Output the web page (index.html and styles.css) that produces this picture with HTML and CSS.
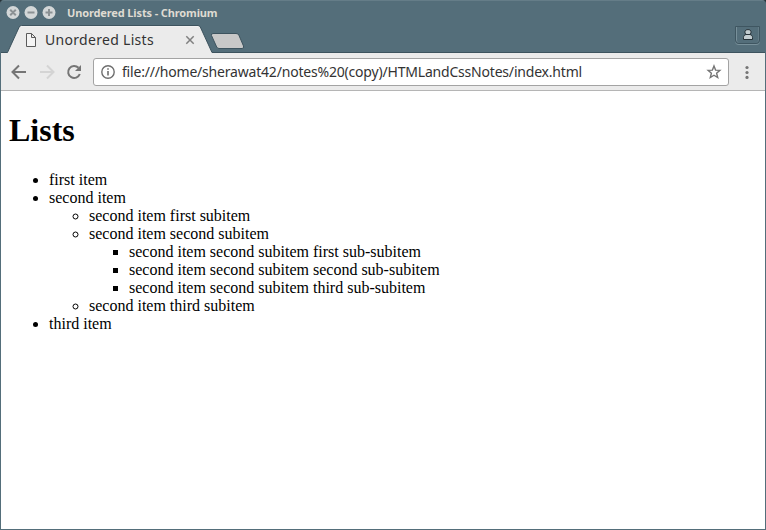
FILE: index.html
```html
<!DOCTYPE html>
<html lang="en">
<head>
<meta charset="utf-8">
<title>Unordered Lists</title>
<link rel="stylesheet" href="styles.css">
</head>
<body>
<div class="window">
  <header class="titlebar">
    <svg class="controls" width="52" height="16" viewBox="0 0 52 16">
      <g fill="#d3d7d8"><circle cx="7" cy="7.500" r="6.500"/><circle cx="25" cy="7.500" r="6.500"/><circle cx="43" cy="7.500" r="6.500"/></g>
      <path d="M4.200 4.700l5.600 5.600M9.800 4.700l-5.600 5.600M21.500 7.500h7M39.500 7.500h7M43 4v7" stroke="#8b9194" stroke-width="2" fill="none"/>
    </svg>
    <span class="window-title">Unordered Lists - Chromium</span>
  </header>
  <div class="tabstrip">
    <div class="tab">
      <svg class="tab-shape" width="208" height="29" viewBox="0 0 208 29">
        <path d="M0 29V27.500H1.500L13.200 2Q14 .5 15.500 .5H192Q193.500 .5 194.300 2L206 27.500H208V29Z" fill="#ebebeb"/>
        <path d="M0 27.500H1.500L13.200 2Q14 .5 15.500 .5H192Q193.500 .5 194.300 2L206 27.500H208" fill="none" stroke="#3d535e"/>
        <path d="M15 1.500H192" stroke="#f1f1f1"/>
      </svg>
      <svg class="doc" width="12" height="14" viewBox="0 0 12 14"><path d="M1.500 .5H6.500L10.500 4.500V13.500H1.500ZM6.500 .5V4.500H10.500" fill="#f4f4f4" stroke="#5a5a5a"/></svg>
      <span class="tab-title">Unordered Lists</span>
      <svg class="close" width="10" height="10" viewBox="0 0 10 10"><path d="M1.300 1.300l7.400 7.400M8.700 1.300l-7.400 7.400" stroke="#808080" stroke-width="1.500"/></svg>
    </div>
    <svg class="newtab" width="36" height="18" viewBox="0 0 36 18"><path d="M3 1.500H26Q28 1.500 28.800 3L33.500 14Q34.300 16.500 32 16.500H9Q7.500 16.500 6.700 15L1.500 3.500Q1 1.500 3 1.500Z" fill="#c8c8c8" stroke="#3d535e"/></svg>
    <div class="profile">
      <svg width="12" height="12" viewBox="0 0 12 12"><path d="M6 .6A2.600 2.600 0 0 0 4.200 5.400C2.200 6 1.500 7 1.500 8.500V10.500H10.500V8.500C10.500 7 9.800 6 7.800 5.400A2.600 2.600 0 0 0 6 .6Z" fill="#c3cdd1" stroke="#263238"/><path d="M4 5.500H8" stroke="#263238"/></svg>
    </div>
  </div>
  <nav class="toolbar">
    <svg class="nav" width="84" height="20" viewBox="0 0 84 20" fill="none" stroke-width="2">
      <path d="M18 10H5M11 3.500L4.500 10L11 16.500" stroke="#757575"/>
      <path d="M32 10H45M39 3.500L45.500 10L39 16.500" stroke="#d4d4d4"/>
      <path d="M70.500 5.800A6 6 0 1 0 71.800 12" stroke="#757575"/><path d="M73 3V9H67Z" fill="#757575"/>
    </svg>
    <div class="omnibox">
      <svg class="info" width="14" height="14" viewBox="0 0 14 14"><circle cx="7" cy="7" r="6.200" fill="none" stroke="#6e6e6e" stroke-width="1.400"/><path d="M7 3.200V4.700M7 6V10.500" stroke="#6e6e6e" stroke-width="1.600"/></svg>
      <span class="url">file:///home/sherawat42/notes%20(copy)/HTMLandCssNotes/index.html</span>
      <svg class="star" width="16" height="16" viewBox="0 0 16 16"><path d="M8 2L9.600 6.100L13.900 6.400L10.600 9.200L11.700 13.500L8 11.200L4.300 13.500L5.400 9.200L2.100 6.400L6.400 6.100Z" fill="none" stroke="#757575" stroke-width="1.400"/></svg>
    </div>
    <svg class="menu" width="4" height="14" viewBox="0 0 4 14" fill="#757575"><circle cx="2" cy="2.500" r="1.600"/><circle cx="2" cy="7.500" r="1.600"/><circle cx="2" cy="12.400" r="1.600"/></svg>
  </nav>
  <main class="page">
    <h1>Lists</h1>
    <ul>
      <li>first item</li>
      <li>second item
        <ul>
          <li>second item first subitem</li>
          <li>second item second subitem
            <ul>
              <li>second item second subitem first sub-subitem</li>
              <li>second item second subitem second sub-subitem</li>
              <li>second item second subitem third sub-subitem</li>
            </ul>
          </li>
          <li>second item third subitem</li>
        </ul>
      </li>
      <li>third item</li>
    </ul>
  </main>
</div>
</body>
</html>
```
FILE: styles.css
```css
* { box-sizing: border-box; }
body { margin: 0; background: #263238; }
svg { display: block; flex: none; }
.window {
  height: 530px;
  display: flex;
  flex-direction: column;
  overflow: hidden;
  background: #546e7a;
  border: 1px solid #546e7a;
  border-top-color: #657d88;
  border-radius: 4px 4px 0 0;
}
.titlebar {
  height: 24px;
  display: flex;
  align-items: center;
  padding-left: 5px;
}
.window-title {
  margin-left: 9px;
  font: bold 11px/16px "Noto Sans", sans-serif;
  letter-spacing: -0.13px;
  color: #dfdbd2;
  white-space: nowrap;
}
.tabstrip {
  height: 29px;
  display: flex;
  align-items: flex-start;
  padding-left: 5px;
  background: linear-gradient(#3d535e, #3d535e) 0 27px / 100% 1px no-repeat, linear-gradient(#ebebeb, #ebebeb) 0 28px / 100% 1px no-repeat;
}
.tab {
  position: relative;
  width: 208px;
  height: 29px;
  display: flex;
  align-items: center;
  padding-left: 19px;
}
.tab-shape { position: absolute; left: 0; top: 0; }
.doc, .tab-title, .close { position: relative; }
.tab-title {
  width: 140px;
  margin-left: 8px;
  font: 14px/20px "Noto Sans", sans-serif;
  letter-spacing: 0.3px;
  color: #333;
  white-space: nowrap;
}
.newtab { margin: 7px 0 0 -4px; }
.profile {
  width: 25px;
  height: 18px;
  margin: 1px 5px 0 auto;
  padding: 2px 0 0 6px;
  border: 1px solid #3f5661;
  border-radius: 0 0 4px 4px;
  box-shadow: inset 1px 0 #78909a, inset -1px 0 #657d88, 0 1px #78909a;
}
.toolbar {
  height: 37px;
  flex: none;
  display: flex;
  align-items: center;
  padding: 0 0 1px 7px;
  background: #ebebeb;
  border-bottom: 1px solid #b5b5b5;
}
.omnibox {
  width: 636px;
  height: 28px;
  display: flex;
  align-items: center;
  padding: 0 6px 0 7px;
  margin-left: 1px;
  border: 1px solid #a3a3a3;
  border-radius: 3px;
  background: #fff;
}
.url {
  margin-left: 7px;
  font: 14px/20px "Noto Sans", sans-serif;
  letter-spacing: -0.195px;
  color: #333;
  white-space: nowrap;
}
.star { margin-left: auto; }
.menu { margin-left: 16px; }
.page {
  flex: 1;
  padding: 0 8px;
  background: #fff;
  color: #000;
  font: 16px/18px "Liberation Serif", serif;
}
.page h1 { margin: 21px 0 22px; font-size: 32px; line-height: 37px; }
.page ul { margin: 0; padding-left: 40px; }
```
